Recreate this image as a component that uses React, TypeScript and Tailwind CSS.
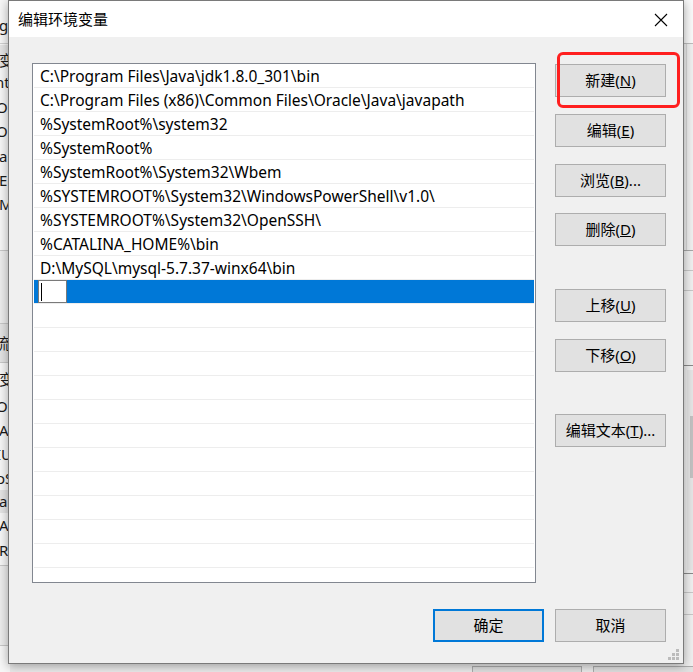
import React from 'react'

const paths = [
  'C:\\Program Files\\Java\\jdk1.8.0_301\\bin',
  'C:\\Program Files (x86)\\Common Files\\Oracle\\Java\\javapath',
  '%SystemRoot%\\system32',
  '%SystemRoot%',
  '%SystemRoot%\\System32\\Wbem',
  '%SYSTEMROOT%\\System32\\WindowsPowerShell\\v1.0\\',
  '%SYSTEMROOT%\\System32\\OpenSSH\\',
  '%CATALINA_HOME%\\bin',
  'D:\\MySQL\\mysql-5.7.37-winx64\\bin',
]

const font = { fontFamily: '"Noto Sans", "Noto Sans CJK SC", sans-serif' }

// the parent window peeking out on the left edge
const leftBits: { y: number; t: string; x: number }[] = [
  { y: 15, t: 'g', x: -1 },
  { y: 50, t: '变', x: -1 },
  { y: 72, t: 'nt', x: -5 },
  { y: 97, t: 'Or', x: -4 },
  { y: 121, t: 'Or', x: -4 },
  { y: 146, t: 'a', x: -1 },
  { y: 170, t: 'E', x: -1 },
  { y: 194, t: 'M', x: -1 },
  { y: 333, t: '流', x: -5 },
  { y: 369, t: '变', x: -1 },
  { y: 396, t: 'Or', x: -4 },
  { y: 420, t: 'A', x: -1 },
  { y: 444, t: 'IU', x: -4 },
  { y: 468, t: 'oS', x: -4 },
  { y: 491, t: 'a', x: -1 },
  { y: 515, t: 'A', x: -1 },
  { y: 540, t: 'R', x: -1 },
]

function Btn({ children, primary }: { children: React.ReactNode; primary?: boolean }) {
  return (
    <button
      className={
        'w-[111px] h-[33px] bg-[#e1e1e1] text-[15px] text-black flex items-center justify-center ' +
        (primary ? 'border-2 border-[#0078d7]' : 'border border-[#adadad]')
      }
    >
      {children}
    </button>
  )
}

export default function App() {
  const rows = Array.from({ length: 22 })
  return (
    <div className="relative w-[693px] h-[672px] overflow-hidden bg-[#ececec]" style={font}>
      {/* background window */}
      <div className="absolute left-0 top-0 w-[10px] h-[672px] bg-[#f7f7f7]">
        <div className="absolute left-0 top-[43px] w-full h-px bg-[#d0d0d0]" />
        <div className="absolute left-0 top-[45px] w-full h-[22px] bg-[#e5e5e5]" />
        <div className="absolute left-0 top-[250px] w-full h-px bg-[#c8c8c8]" />
        <div className="absolute left-0 top-[251px] w-full h-[72px] bg-[#ededed]" />
        <div className="absolute left-0 top-[323px] w-full h-px bg-[#c8c8c8]" />
        <div className="absolute left-0 top-[324px] w-full h-[38px] bg-[#e4e4e4]" />
        <div className="absolute left-0 top-[362px] w-full h-px bg-[#c8c8c8]" />
        <div className="absolute left-0 top-[490px] w-full h-[23px] bg-[#e5e5e5]" />
        <div className="absolute left-0 top-[565px] w-full h-px bg-[#c8c8c8]" />
        <div className="absolute left-0 top-[566px] w-full h-[80px] bg-[#ededed]" />
        <div className="absolute left-0 top-[645px] w-full h-px bg-[#c8c8c8]" />
        {leftBits.map((b, i) => (
          <div
            key={i}
            className="absolute text-[15px] leading-[20px] text-[#1a1a1a] whitespace-nowrap"
            style={{ top: b.y, left: b.x }}
          >
            {b.t}
          </div>
        ))}
      </div>
      <div className="absolute left-[684px] top-0 w-[9px] h-[672px] bg-[#f0f0f0]">
        <div className="absolute left-0 top-0 w-full h-[43px] bg-[#fafafa]" />
        <div className="absolute left-0 top-[43px] w-full h-px bg-[#bdbdbd]" />
        <div className="absolute left-[2px] top-[44px] w-px h-[206px] bg-[#d8d8d8]" />
        <div className="absolute left-0 top-[250px] w-full h-px bg-[#a8a8a8]" />
        <div className="absolute left-0 top-[270px] w-full h-px bg-[#c8c8c8]" />
        <div className="absolute left-0 top-[290px] w-full h-px bg-[#c8c8c8]" />
        <div className="absolute left-0 top-[365px] w-full h-px bg-[#8a8a8a]" />
        <div className="absolute left-[3px] top-[370px] w-[6px] h-[200px] bg-[#e6e6e6]" />
        <div className="absolute left-[6px] top-[416px] w-[3px] h-[62px] bg-[#c2c2c2]" />
        <div className="absolute left-0 top-[573px] w-full h-px bg-[#8a8a8a]" />
        <div className="absolute left-0 top-[592px] w-full h-px bg-[#c8c8c8]" />
        <div className="absolute left-0 top-[614px] w-full h-px bg-[#c8c8c8]" />
      </div>
      <div className="absolute left-[472px] top-[666px] w-[110px] h-[10px] border border-[#adadad] bg-[#e1e1e1]" />
      <div className="absolute left-[593px] top-[666px] w-[110px] h-[10px] border border-[#adadad] bg-[#e1e1e1]" />

      {/* dialog */}
      <div className="absolute left-[8px] top-0 w-[676px] h-[664px] border border-[#7a7a7a] bg-[#f0f0f0] shadow-[0_2px_10px_rgba(0,0,0,0.35)] flex flex-col">
        <div className="h-[36px] bg-white flex items-center justify-between pl-[9px] pr-[15px]">
          <span className="text-[15px] text-black">编辑环境变量</span>
          <svg width="14" height="14" viewBox="0 0 14 14" className="mt-[1px]">
            <path d="M1 1 L13 13 M13 1 L1 13" stroke="#000" strokeWidth="1.1" fill="none" />
          </svg>
        </div>

        <div className="flex-1 flex flex-col pt-[26px] pl-[23px] pr-[17px]">
          <div className="flex gap-[19px]">
            <div className="w-[504px] h-[520px] border border-[#828790] bg-white overflow-hidden">
              {rows.map((_, i) => {
                const text = paths[i]
                const selected = i === paths.length
                return (
                  <div key={i} className="h-[24px] mx-px border-b border-[#ededed] flex items-center">
                    {selected ? (
                      <div className="h-[23px] w-full bg-[#0078d7] flex items-stretch pl-[4px]">
                        <div className="w-[29px] h-[23px] bg-white border border-[#7a7a7a] flex items-center pl-[2px]">
                          <div className="w-px h-[18px] bg-black" />
                        </div>
                      </div>
                    ) : (
                      <span className="pl-[6px] pt-px text-[15.5px] leading-[22px] text-black whitespace-nowrap">{text}</span>
                    )}
                  </div>
                )
              })}
            </div>

            <div className="flex flex-col pt-px">
              <Btn>新建(<u>N</u>)</Btn>
              <div className="h-[17px]" />
              <Btn>编辑(<u>E</u>)</Btn>
              <div className="h-[17px]" />
              <Btn>浏览(<u>B</u>)...</Btn>
              <div className="h-[16px]" />
              <Btn>删除(<u>D</u>)</Btn>
              <div className="h-[43px]" />
              <Btn>上移(<u>U</u>)</Btn>
              <div className="h-[17px]" />
              <Btn>下移(<u>O</u>)</Btn>
              <div className="h-[42px]" />
              <Btn>编辑文本(<u>T</u>)...</Btn>
            </div>
          </div>

          <div className="flex justify-end gap-[11px] mt-[26px]">
            <Btn primary>确定</Btn>
            <Btn>取消</Btn>
          </div>
        </div>

        {/* resize grip */}
        <svg width="12" height="12" viewBox="0 0 12 12" className="absolute right-[3px] bottom-[2px]">
          <rect x="8" y="0" width="3" height="3" fill="#bcbcbc" />
          <rect x="4" y="4" width="3" height="3" fill="#bcbcbc" />
          <rect x="8" y="4" width="3" height="3" fill="#bcbcbc" />
          <rect x="0" y="8" width="3" height="3" fill="#bcbcbc" />
          <rect x="4" y="8" width="3" height="3" fill="#bcbcbc" />
          <rect x="8" y="8" width="3" height="3" fill="#bcbcbc" />
        </svg>
      </div>

      {/* red annotation box */}
      <div className="absolute left-[557px] top-[52px] w-[123px] h-[56px] border-[3px] border-[#ff1f1f] rounded-[6px]" />
    </div>
  )
}
